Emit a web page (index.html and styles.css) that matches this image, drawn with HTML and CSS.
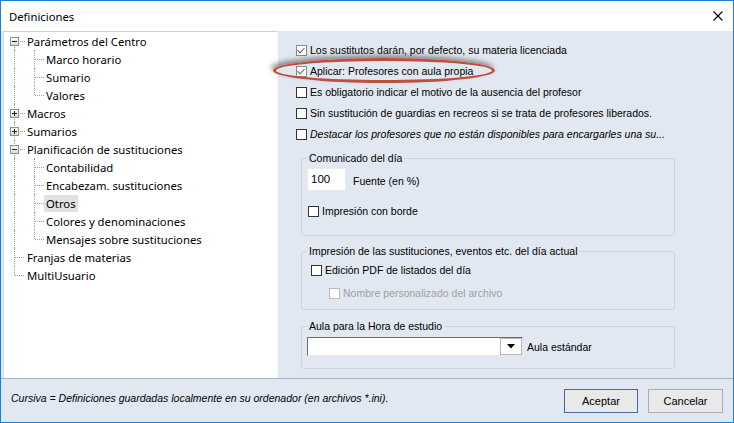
FILE: index.html
```html
<!DOCTYPE html>
<html lang="es">
<head>
<meta charset="utf-8">
<title>Definiciones</title>
<link rel="stylesheet" href="styles.css">
</head>
<body>
<div class="window">
  <div class="titlebar">
    <span class="title">Definiciones</span>
    <svg class="close" width="10" height="10" viewBox="0 0 10 10"><path d="M0.5 0.5 L9.5 9.5 M9.5 0.5 L0.5 9.5" stroke="#000" stroke-width="1.1" fill="none"/></svg>
  </div>
  <div class="main">
    <div class="tree">
      <div class="row"><span class="cell box-first"><span class="pm minus"></span></span><span class="label l1">Parámetros del Centro</span></div>
      <div class="row"><span class="cell v"></span><span class="cell tee"></span><span class="label">Marco horario</span></div>
      <div class="row"><span class="cell v"></span><span class="cell tee"></span><span class="label">Sumario</span></div>
      <div class="row"><span class="cell v"></span><span class="cell last"></span><span class="label">Valores</span></div>
      <div class="row"><span class="cell box-mid"><span class="pm plus"></span></span><span class="label l1">Macros</span></div>
      <div class="row"><span class="cell box-mid"><span class="pm plus"></span></span><span class="label l1">Sumarios</span></div>
      <div class="row"><span class="cell box-mid"><span class="pm minus"></span></span><span class="label l1">Planificación de sustituciones</span></div>
      <div class="row"><span class="cell v"></span><span class="cell tee"></span><span class="label">Contabilidad</span></div>
      <div class="row"><span class="cell v"></span><span class="cell tee"></span><span class="label">Encabezam. sustituciones</span></div>
      <div class="row"><span class="cell v"></span><span class="cell tee"></span><span class="label selected">Otros</span></div>
      <div class="row"><span class="cell v"></span><span class="cell tee"></span><span class="label">Colores y denominaciones</span></div>
      <div class="row"><span class="cell v"></span><span class="cell last"></span><span class="label">Mensajes sobre sustituciones</span></div>
      <div class="row"><span class="cell tee"></span><span class="label l1">Franjas de materias</span></div>
      <div class="row"><span class="cell last"></span><span class="label l1">MultiUsuario</span></div>
    </div>
    <div class="settings">
      <div class="chk checked"><span class="cb"></span><span>Los sustitutos darán, por defecto, su materia licenciada</span></div>
      <div class="chk checked"><span class="cb"></span><span>Aplicar: Profesores con aula propia</span></div>
      <div class="chk"><span class="cb"></span><span>Es obligatorio indicar el motivo de la ausencia del profesor</span></div>
      <div class="chk"><span class="cb"></span><span>Sin sustitución de guardias en recreos si se trata de profesores liberados.</span></div>
      <div class="chk italic sp"><span class="cb"></span><span>Destacar los profesores que no están disponibles para encargarles una su...</span></div>

      <fieldset class="group g1">
        <legend>Comunicado del día</legend>
        <div class="font-row"><span class="num">100</span><span class="font-label">Fuente (en %)</span></div>
        <div class="chk border-chk"><span class="cb"></span><span>Impresión con borde</span></div>
      </fieldset>

      <fieldset class="group g2">
        <legend>Impresión de las sustituciones, eventos etc. del día actual</legend>
        <div class="chk pdf-chk"><span class="cb"></span><span>Edición PDF de listados del día</span></div>
        <div class="chk disabled name-chk"><span class="cb"></span><span>Nombre personalizado del archivo</span></div>
      </fieldset>

      <fieldset class="group g3">
        <legend>Aula para la Hora de estudio</legend>
        <div class="combo-row">
          <div class="combo"><span class="combo-field"></span><span class="combo-btn"><svg width="8" height="5" viewBox="0 0 8 5"><path d="M0 0 H8 L4 4.5 Z" fill="#000"/></svg></span></div>
          <span class="combo-label">Aula estándar</span>
        </div>
      </fieldset>

      <div class="ring"></div>
    </div>
  </div>
  <div class="footer">
    <span class="note">Cursiva = Definiciones guardadas localmente en su ordenador (en archivos *.ini).</span>
    <div class="buttons">
      <button class="btn default">Aceptar</button>
      <button class="btn">Cancelar</button>
    </div>
  </div>
</div>
</body>
</html>
```
FILE: styles.css
```css
* { box-sizing: border-box; }
html, body { margin: 0; padding: 0; background: #fff; }
body { width: 734px; height: 423px; overflow: hidden; }

.window {
  width: 734px;
  height: 423px;
  border: 1px solid #1a7fd5;
  display: flex;
  flex-direction: column;
  background: #e2e8f1;
  font-family: "Liberation Sans", Arial, sans-serif;
  font-size: 10.5px;
  color: #000;
}

.titlebar {
  height: 30px;
  flex: none;
  background: #fff;
  display: flex;
  align-items: center;
  justify-content: space-between;
  padding: 0 10px 0 8px;
}
.title {
  font-family: "Noto Sans", sans-serif;
  font-size: 11.3px;
  margin-top: 1px;
}
.close { display: block; }

.main {
  height: 347px;
  flex: none;
  display: flex;
}

.tree {
  width: 275px;
  margin-left: 2px;
  background: #fff;
  border-top: 1px solid #c9d1dd;
  border-left: 1px solid #d8dee7;
  padding-top: 0;
  font-family: "Noto Sans", sans-serif;
  font-size: 11.3px;
  color: #000;
}
.row {
  height: 18px;
  display: flex;
  align-items: center;
}
.cell {
  position: relative;
  width: 20px;
  height: 18px;
  flex: none;
}
.cell.v::before,
.cell.tee::before,
.cell.last::before {
  content: "";
  position: absolute;
  left: 10px;
  top: 0;
  bottom: 0;
  border-left: 1px dotted #a0a0a0;
}
.cell.last::before { bottom: auto; height: 9px; }
.cell.tee::after,
.cell.last::after,
.cell.box-first::after,
.cell.box-mid::after {
  content: "";
  position: absolute;
  left: 11px;
  top: 9px;
  width: 9px;
  border-top: 1px dotted #a0a0a0;
}
.cell.box-first::after,
.cell.box-mid::after { left: 16px; width: 5px; }
.cell.box-first::before,
.cell.box-mid::before {
  content: "";
  position: absolute;
  left: 10px;
  top: 13px;
  bottom: 0;
  border-left: 1px dotted #a0a0a0;
}
.cell.box-mid::before { top: 0; }
.pm {
  position: absolute;
  left: 6px;
  top: 5px;
  width: 9px;
  height: 9px;
  border: 1px solid #8f8f8f;
  background: linear-gradient(#ffffff, #dcdcdc);
  z-index: 1;
}
.pm::before {
  content: "";
  position: absolute;
  left: 1px;
  top: 3px;
  width: 5px;
  height: 1px;
  background: #222;
}
.pm.plus::after {
  content: "";
  position: absolute;
  left: 3px;
  top: 1px;
  width: 1px;
  height: 5px;
  background: #222;
}
.label {
  padding: 0 2px;
  line-height: 17px;
  white-space: nowrap;
}
.label.l1 { margin-left: 1px; }
.label.selected { background: #e2e2e2; }

.settings {
  position: relative;
  flex: 1;
  padding: 12px 0 0 18px;
}

.chk {
  display: flex;
  align-items: center;
  height: 14px;
  margin-bottom: 7px;
  white-space: nowrap;
}
.chk.sp { margin-top: 2px; margin-bottom: 0; }
.chk.italic { font-style: italic; }
.cb {
  width: 11px;
  height: 11px;
  border: 1px solid #333;
  background: #fff;
  margin-right: 3px;
  flex: none;
  position: relative;
}
.chk.checked .cb { border-color: #8a8a8a; }
.chk.checked .cb::after {
  content: "";
  position: absolute;
  left: 2px;
  top: 0px;
  width: 3px;
  height: 6px;
  border-right: 1.5px solid #6a6a6a;
  border-bottom: 1.5px solid #6a6a6a;
  transform: rotate(45deg);
}
.chk.disabled { color: #a0a0a0; }
.chk.disabled .cb { border-color: #bcbcbc; }

.group {
  margin: 0 0 0 5px;
  width: 374px;
  border: 1px solid #cfd5dd;
  border-radius: 3px;
  padding: 0 6px 0 5px;
  min-width: 0;
}
.group legend {
  padding: 0 2px;
  line-height: 14px;
}
.g1 { margin-top: 10px; padding-bottom: 17px; }
.g2 { margin-top: 8px; padding-bottom: 9px; }
.g3 { margin-top: 9px; padding-bottom: 12px; }

.font-row {
  display: flex;
  align-items: center;
  margin-top: 3px;
}
.num {
  width: 39px;
  height: 23px;
  background: #fff;
  border: 1px solid #eaeaea;
  padding: 3px 0 0 3px;
  font-size: 11.5px;
  line-height: 14px;
  align-self: flex-start;
}
.font-label { margin-left: 7px; margin-top: 3px; }
.border-chk { margin: 13px 0 0 1px; }
.pdf-chk { margin: 5px 0 0 4px; }
.name-chk { margin: 9px 0 0 22px; }

.combo-row {
  display: flex;
  align-items: center;
  margin-top: 4px;
}
.combo {
  width: 216px;
  height: 19px;
  display: flex;
  background: #fff;
  border-top: 1px solid #6e6e6e;
  border-left: 1px solid #6e6e6e;
  border-bottom: 1px solid #e6e6e6;
  border-right: 1px solid #e6e6e6;
}
.combo-field { flex: 1; }
.combo-btn {
  width: 22px;
  border: 1px solid #b9b9b9;
  background: #fff;
  display: flex;
  align-items: center;
  justify-content: center;
}
.combo-btn svg { display: block; }
.combo-label { margin-left: 4px; }

.ring {
  position: absolute;
  left: -5px;
  top: 27px;
  width: 222px;
  height: 25px;
  border: 3px solid #bf4f3c;
  border-radius: 50%;
  box-shadow: -2px -3px 5px rgba(60, 60, 60, 0.55);
  pointer-events: none;
}

.footer {
  flex: 1;
  border-top: 1px solid #a3b2ca;
  display: flex;
  align-items: center;
  justify-content: space-between;
  padding: 0 10px 0 10px;
}
.note {
  font-style: italic;
  margin-bottom: 6px;
  white-space: nowrap;
}
.buttons {
  display: flex;
  gap: 10px;
  margin-top: 1px;
}
.btn {
  font-family: "Liberation Sans", Arial, sans-serif;
  font-size: 11px;
  width: 74px;
  height: 24px;
  padding: 0;
  background: #e9e9e9;
  border: 1px solid #adadad;
  color: #000;
}
.btn.default { border-color: #3d6ca8; }
.btn + .btn { width: 75px; }
```
